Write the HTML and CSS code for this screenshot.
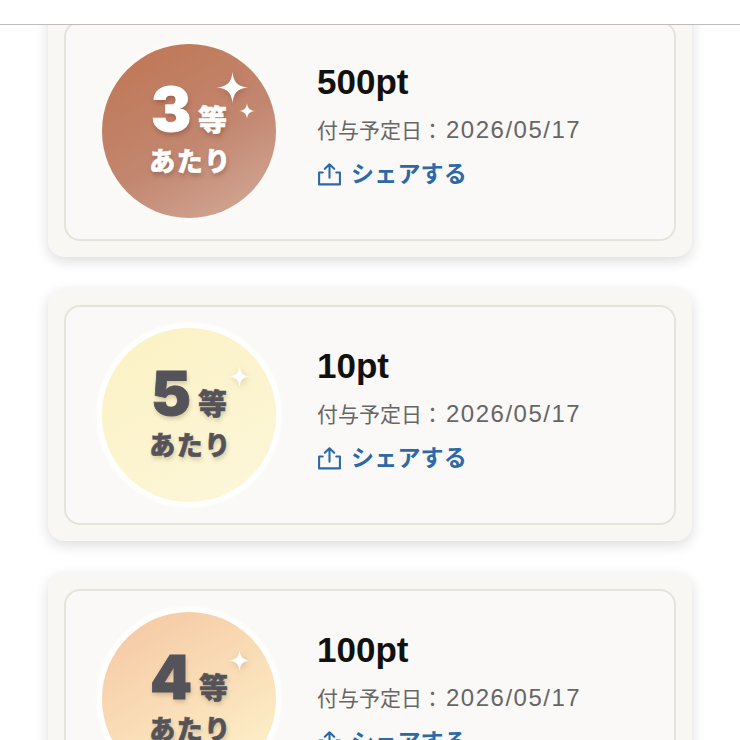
FILE: index.html
```html
<!DOCTYPE html>
<html lang="ja">
<head>
    <meta charset="UTF-8">
    <meta name="viewport" content="width=device-width, initial-scale=1.0">
    <title>ポイント</title>
    <link rel="stylesheet" href="styles.css">
</head>
<body>

    <header class="top-bar"></header>

    <main class="scroller">
        <ul class="prize-list">
            <li class="prize-card">
                <div class="prize-inner">
                    <div class="badge badge-bronze">
                        <svg class="spark spark-big" viewBox="0 0 32 32"><path d="M16 0C17 10 21 15 32 16C21 17 17 22 16 32C15 22 11 17 0 16C11 15 15 10 16 0Z"/></svg>
                        <svg class="spark spark-small" viewBox="0 0 32 32"><path d="M16 0C17 10 21 15 32 16C21 17 17 22 16 32C15 22 11 17 0 16C11 15 15 10 16 0Z"/></svg>
                        <div class="rank"><span class="rank-num">3</span><span class="rank-unit">等</span></div>
                        <div class="rank-label">あたり</div>
                    </div>
                    <div class="prize-info">
                        <div class="prize-points">500pt</div>
                        <div class="prize-date">付与予定日：<span class="date-num">2026/05/17</span></div>
                        <a class="share-link" href="#">
                            <svg class="share-icon" viewBox="0 0 24 24"><path d="M12 15V2.5M7.5 6.5L12 2.2L16.5 6.5M5.5 10H2V21.5H22V10H18.5"/></svg>
                            シェアする
                        </a>
                    </div>
                </div>
            </li>
            <li class="prize-card">
                <div class="prize-inner">
                    <div class="badge badge-yellow">
                        <svg class="spark spark-solo" viewBox="0 0 32 32"><path d="M16 0C17 10 21 15 32 16C21 17 17 22 16 32C15 22 11 17 0 16C11 15 15 10 16 0Z"/></svg>
                        <div class="rank"><span class="rank-num">5</span><span class="rank-unit">等</span></div>
                        <div class="rank-label">あたり</div>
                    </div>
                    <div class="prize-info">
                        <div class="prize-points">10pt</div>
                        <div class="prize-date">付与予定日：<span class="date-num">2026/05/17</span></div>
                        <a class="share-link" href="#">
                            <svg class="share-icon" viewBox="0 0 24 24"><path d="M12 15V2.5M7.5 6.5L12 2.2L16.5 6.5M5.5 10H2V21.5H22V10H18.5"/></svg>
                            シェアする
                        </a>
                    </div>
                </div>
            </li>
            <li class="prize-card">
                <div class="prize-inner">
                    <div class="badge badge-orange">
                        <svg class="spark spark-solo" viewBox="0 0 32 32"><path d="M16 0C17 10 21 15 32 16C21 17 17 22 16 32C15 22 11 17 0 16C11 15 15 10 16 0Z"/></svg>
                        <div class="rank"><span class="rank-num">4</span><span class="rank-unit">等</span></div>
                        <div class="rank-label">あたり</div>
                    </div>
                    <div class="prize-info">
                        <div class="prize-points">100pt</div>
                        <div class="prize-date">付与予定日：<span class="date-num">2026/05/17</span></div>
                        <a class="share-link" href="#">
                            <svg class="share-icon" viewBox="0 0 24 24"><path d="M12 15V2.5M7.5 6.5L12 2.2L16.5 6.5M5.5 10H2V21.5H22V10H18.5"/></svg>
                            シェアする
                        </a>
                    </div>
                </div>
            </li>
        </ul>
    </main>

</body>
</html>
```
FILE: styles.css
```css
:root {
    --card-color: #f8f7f4;
    --inner-color: #faf9f7;
    --inner-border: #e6e3da;
    --text-color: #111;
    --sub-color: #666;
    --link-color: #2c69a6;
    --dark-badge: #55535a;
}

html, body {
    height: 100%;
}

body {
    margin: 0;
    display: flex;
    flex-direction: column;
    overflow: hidden;
    background-color: #fff;
    font-family: "Liberation Sans", "Noto Sans CJK JP", sans-serif;
}

.top-bar {
    flex: none;
    height: 24px;
    background-color: #fff;
    border-bottom: 1px solid #bdbdbd;
}

.scroller {
    flex: 1;
    min-height: 0;
    overflow: hidden;
}

.prize-list {
    list-style: none;
    margin: -20px 48px 0;
    padding: 0;
    display: flex;
    flex-direction: column;
    gap: 32px;
}

.prize-card {
    flex: none;
    padding: 16px;
    background-color: var(--card-color);
    border-radius: 16px;
    box-shadow: 0 4px 14px rgba(0, 0, 0, 0.14);
}

.prize-inner {
    height: 216px;
    display: flex;
    align-items: center;
    gap: 41px;
    padding-left: 36px;
    background-color: var(--inner-color);
    border: 2px solid var(--inner-border);
    border-radius: 16px;
}

.badge {
    position: relative;
    flex: none;
    width: 174px;
    height: 174px;
    border-radius: 50%;
    display: flex;
    flex-direction: column;
    align-items: center;
    justify-content: center;
    font-family: "Noto Sans CJK JP", sans-serif;
    font-weight: 900;
    box-shadow: 0 0 2px 6px #fefefc;
}

.badge-bronze {
    color: #fff;
    background: linear-gradient(150deg, #c07a5a 15%, #c2866f 55%, #d2a896 95%);
    box-shadow: 0 0 3px 5px #fbfaf7;
}

.badge-bronze .rank,
.badge-bronze .rank-label {
    text-shadow: 1px 3px 5px rgba(70, 30, 15, 0.3);
}

.badge-yellow {
    color: var(--dark-badge);
    background: linear-gradient(150deg, #fbf1c3, #fdf7da);
}

.badge-orange {
    color: var(--dark-badge);
    background: linear-gradient(150deg, #f6cda8 15%, #fdf1c9 90%);
}

.badge-yellow .rank,
.badge-yellow .rank-label,
.badge-orange .rank,
.badge-orange .rank-label {
    text-shadow: 1px 3px 4px rgba(80, 70, 40, 0.25);
}

.rank {
    display: flex;
    align-items: flex-end;
    gap: 7px;
    height: 58px;
    margin-top: -4px;
}

.rank-num {
    font-family: Inter, "Noto Sans CJK JP", sans-serif;
    font-size: 60px;
    line-height: 58px;
    -webkit-text-stroke: 0.8px currentColor;
}

.rank-unit {
    font-size: 29px;
    line-height: 40px;
    margin-top: auto;
    -webkit-text-stroke: 0.5px currentColor;
}

.rank-label {
    font-size: 26px;
    line-height: 36px;
    letter-spacing: 1.5px;
    margin: 4px 0 0 3px;
    -webkit-text-stroke: 0.5px currentColor;
}

.spark {
    position: absolute;
    fill: #fff;
}

.spark-big {
    top: 28px;
    left: 115px;
    width: 31px;
    height: 31px;
    filter: drop-shadow(1px 2px 3px rgba(70, 30, 15, 0.25));
}

.spark-small {
    top: 59px;
    left: 137px;
    width: 16px;
    height: 16px;
}

.spark-solo {
    top: 38px;
    left: 127px;
    width: 21px;
    height: 21px;
    filter: drop-shadow(1px 2px 3px rgba(120, 100, 50, 0.25));
}

.prize-info {
    display: flex;
    flex-direction: column;
    align-items: flex-start;
    margin-top: -10px;
}

.prize-points {
    font-size: 35px;
    font-weight: bold;
    line-height: 40px;
    color: var(--text-color);
}

.prize-date {
    margin-top: 13px;
    font-size: 21px;
    line-height: 30px;
    color: var(--sub-color);
}

.date-num {
    margin-left: 3px;
    font-size: 24px;
    letter-spacing: 1.5px;
}

.share-link {
    display: flex;
    align-items: center;
    gap: 9px;
    margin-top: 12px;
    font-size: 23px;
    font-weight: bold;
    line-height: 32px;
    letter-spacing: 0.2px;
    color: var(--link-color);
    text-decoration: none;
}

.share-icon {
    width: 25px;
    height: 25px;
    fill: none;
    stroke: var(--link-color);
    stroke-width: 2;
    stroke-linecap: round;
    stroke-linejoin: round;
}
```
